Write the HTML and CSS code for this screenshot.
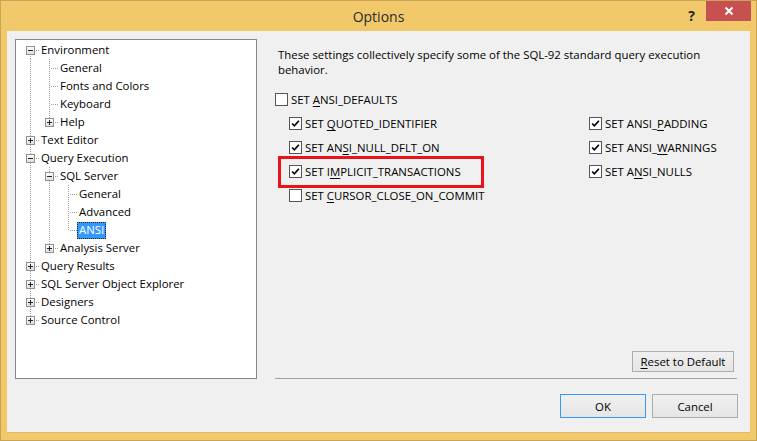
FILE: index.html
```html
<!DOCTYPE html>
<html lang="en">
<head>
    <meta charset="UTF-8" />
    <title>Options</title>
    <link rel="stylesheet" href="styles.css">
</head>
<body>
    <svg width="0" height="0" class="defs">
        <symbol id="plus" viewBox="0 0 9 9">
            <rect x="0.5" y="0.5" width="8" height="8" fill="url(#expfill)" stroke="#919191" />
            <path d="M2 4.5h5M4.5 2v5" stroke="#222" stroke-width="1" />
        </symbol>
        <symbol id="minus" viewBox="0 0 9 9">
            <rect x="0.5" y="0.5" width="8" height="8" fill="url(#expfill)" stroke="#919191" />
            <path d="M2 4.5h5" stroke="#222" stroke-width="1" />
        </symbol>
        <linearGradient id="expfill" x1="0" y1="0" x2="0" y2="1">
            <stop offset="0" stop-color="#ffffff" />
            <stop offset="1" stop-color="#dcdcdc" />
        </linearGradient>
        <symbol id="tick" viewBox="0 0 13 13">
            <path d="M2.5 6.5l2.7 2.8 5.3-6" fill="none" stroke="#000" stroke-width="2" />
        </symbol>
    </svg>

    <div class="window">
        <div class="titlebar">
            <span class="title">Options</span>
            <span class="help">?</span>
            <span class="close">
                <svg width="10" height="10" viewBox="0 0 10 10"><path d="M1.5 1.5l7 7M8.5 1.5l-7 7" stroke="#fff" stroke-width="2" /></svg>
            </span>
        </div>

        <div class="client">
            <div class="top">
                <div class="tree">
                    <div class="row"><span class="c first"><svg class="exp"><use href="#minus" /></svg></span><span class="lbl">Environment</span></div>
                    <div class="row"><span class="c pipe"></span><span class="c tee"></span><span class="lbl">General</span></div>
                    <div class="row"><span class="c pipe"></span><span class="c tee"></span><span class="lbl">Fonts and Colors</span></div>
                    <div class="row"><span class="c pipe"></span><span class="c tee"></span><span class="lbl">Keyboard</span></div>
                    <div class="row"><span class="c pipe"></span><span class="c elbow"><svg class="exp"><use href="#plus" /></svg></span><span class="lbl">Help</span></div>
                    <div class="row"><span class="c tee"><svg class="exp"><use href="#plus" /></svg></span><span class="lbl">Text Editor</span></div>
                    <div class="row"><span class="c tee"><svg class="exp"><use href="#minus" /></svg></span><span class="lbl">Query Execution</span></div>
                    <div class="row"><span class="c pipe"></span><span class="c tee"><svg class="exp"><use href="#minus" /></svg></span><span class="lbl">SQL Server</span></div>
                    <div class="row"><span class="c pipe"></span><span class="c pipe"></span><span class="c tee"></span><span class="lbl">General</span></div>
                    <div class="row"><span class="c pipe"></span><span class="c pipe"></span><span class="c tee"></span><span class="lbl">Advanced</span></div>
                    <div class="row"><span class="c pipe"></span><span class="c pipe"></span><span class="c elbow"></span><span class="lbl selected">ANSI</span></div>
                    <div class="row"><span class="c pipe"></span><span class="c elbow"><svg class="exp"><use href="#plus" /></svg></span><span class="lbl">Analysis Server</span></div>
                    <div class="row"><span class="c tee"><svg class="exp"><use href="#plus" /></svg></span><span class="lbl">Query Results</span></div>
                    <div class="row"><span class="c tee"><svg class="exp"><use href="#plus" /></svg></span><span class="lbl">SQL Server Object Explorer</span></div>
                    <div class="row"><span class="c tee"><svg class="exp"><use href="#plus" /></svg></span><span class="lbl">Designers</span></div>
                    <div class="row"><span class="c elbow"><svg class="exp"><use href="#plus" /></svg></span><span class="lbl">Source Control</span></div>
                </div>

                <div class="panel">
                    <p class="desc">These settings collectively specify some of the SQL-92 standard query execution<br>behavior.</p>
                    <div class="opts">
                        <label class="opt wide"><span class="box"></span><span>SET <u>A</u>NSI_DEFAULTS</span></label>
                        <label class="opt"><span class="box"><svg><use href="#tick" /></svg></span><span>SET <u>Q</u>UOTED_IDENTIFIER</span></label>
                        <label class="opt"><span class="box"><svg><use href="#tick" /></svg></span><span>SET ANSI_<u>P</u>ADDING</span></label>
                        <label class="opt"><span class="box"><svg><use href="#tick" /></svg></span><span>SET AN<u>S</u>I_NULL_DFLT_ON</span></label>
                        <label class="opt"><span class="box"><svg><use href="#tick" /></svg></span><span>SET ANSI_<u>W</u>ARNINGS</span></label>
                        <label class="opt marked"><span class="box"><svg><use href="#tick" /></svg></span><span>SET I<u>M</u>PLICIT_TRANSACTIONS</span></label>
                        <label class="opt"><span class="box"><svg><use href="#tick" /></svg></span><span>SET A<u>N</u>SI_NULLS</span></label>
                        <label class="opt"><span class="box"></span><span>SET <u>C</u>URSOR_CLOSE_ON_COMMIT</span></label>
                    </div>
                    <div class="reset-row">
                        <button class="btn reset"><u>R</u>eset to Default</button>
                    </div>
                </div>
            </div>

            <div class="buttons">
                <button class="btn default">OK</button>
                <button class="btn">Cancel</button>
            </div>
        </div>
    </div>
</body>
</html>
```

FILE: styles.css
```css
* {
    margin: 0;
    padding: 0;
    box-sizing: border-box;
}
body {
    background: #f1c96b;
    font-family: "Open Sans", "Noto Sans", sans-serif;
    font-size: 11.4px;
    color: #000;
}
.defs {
    position: absolute;
}
.window {
    width: 757px;
    height: 441px;
    border: 1px solid #c9a457;
    background: #f1c96b;
    display: flex;
    flex-direction: column;
}
.titlebar {
    height: 30px;
    display: flex;
    align-items: flex-start;
    position: relative;
}
.title {
    position: absolute;
    left: 0;
    right: 0;
    top: 6px;
    text-align: center;
    font-size: 14px;
    color: #2b2b2b;
}
.help {
    margin-left: auto;
    margin-top: 5px;
    margin-right: 11px;
    font-weight: bold;
    font-size: 14px;
    color: #222;
    position: relative;
}
.close {
    width: 45px;
    height: 20px;
    margin-right: 5px;
    background: #c75050;
    display: flex;
    align-items: center;
    justify-content: center;
    position: relative;
}
.client {
    margin: 0 6px 7px 6px;
    flex: 1;
    background: #f0f0f0;
    border-bottom: 1px solid #dcb868;
    padding: 8px 12px 0 8px;
    display: flex;
    flex-direction: column;
}
.top {
    display: flex;
    gap: 18px;
    height: 340px;
}
.tree {
    width: 242px;
    background: #fff;
    border: 1px solid #828790;
    padding: 1px 0 0 5px;
}
.row {
    height: 18px;
    display: flex;
    white-space: nowrap;
}
.c {
    width: 19px;
    height: 18px;
    flex: none;
    --dv: repeating-linear-gradient(to bottom, #a0a0a0 0 1px, transparent 1px 2px);
    --dh: repeating-linear-gradient(to right, #a0a0a0 0 1px, transparent 1px 2px);
}
.pipe {
    background: var(--dv) no-repeat 9px 0 / 1px 18px;
}
.tee {
    background: var(--dv) no-repeat 9px 0 / 1px 18px, var(--dh) no-repeat 11px 9px / 8px 1px;
}
.elbow {
    background: var(--dv) no-repeat 9px 0 / 1px 10px, var(--dh) no-repeat 11px 9px / 8px 1px;
}
.first {
    background: var(--dv) no-repeat 9px 9px / 1px 9px, var(--dh) no-repeat 11px 9px / 8px 1px;
}
.exp {
    display: block;
    width: 9px;
    height: 9px;
    margin: 5px 0 0 5px;
}
.lbl {
    height: 17px;
    margin: 1px 0 0 -1px;
    padding: 0 2px;
    line-height: 16px;
}
.selected {
    background: #3399ff;
    color: #fff;
    outline: 1px dotted #222;
    outline-offset: -1px;
}
.panel {
    width: 462px;
    border-bottom: 1px solid #a0a0a0;
    display: flex;
    flex-direction: column;
}
.desc {
    margin-top: 8px;
    padding-left: 3px;
    line-height: 15px;
}
.opts {
    margin-top: 10px;
    display: grid;
    grid-template-columns: 300px 1fr;
    grid-auto-rows: 24px;
    padding-left: 14px;
}
.opt {
    display: flex;
    align-items: center;
    gap: 3px;
    white-space: nowrap;
    position: relative;
}
.opt.wide {
    grid-column: 1 / 3;
    margin-left: -14px;
}
.opt u, .btn u {
    text-decoration-thickness: 1px;
    text-underline-offset: 2px;
}
.box {
    width: 13px;
    height: 13px;
    border: 1px solid #555;
    background: #fff;
    flex: none;
}
.box svg {
    display: block;
    width: 11px;
    height: 11px;
}
.marked::after {
    content: "";
    position: absolute;
    left: -11px;
    top: -3px;
    width: 200px;
    height: 26px;
    border: 3px solid #e8141c;
}
.reset-row {
    margin-top: auto;
    display: flex;
    justify-content: flex-end;
    padding: 0 3px 6px 0;
}
.btn {
    font-family: inherit;
    font-size: 11.4px;
    color: #000;
    background: linear-gradient(#f0f0f0, #e5e5e5);
    border: 1px solid #acacac;
    height: 24px;
    width: 86px;
}
.reset {
    width: 102px;
    height: 21px;
}
.default {
    border-color: #3399ff;
}
.buttons {
    margin-top: 15px;
    display: flex;
    justify-content: flex-end;
    gap: 6px;
}
```
